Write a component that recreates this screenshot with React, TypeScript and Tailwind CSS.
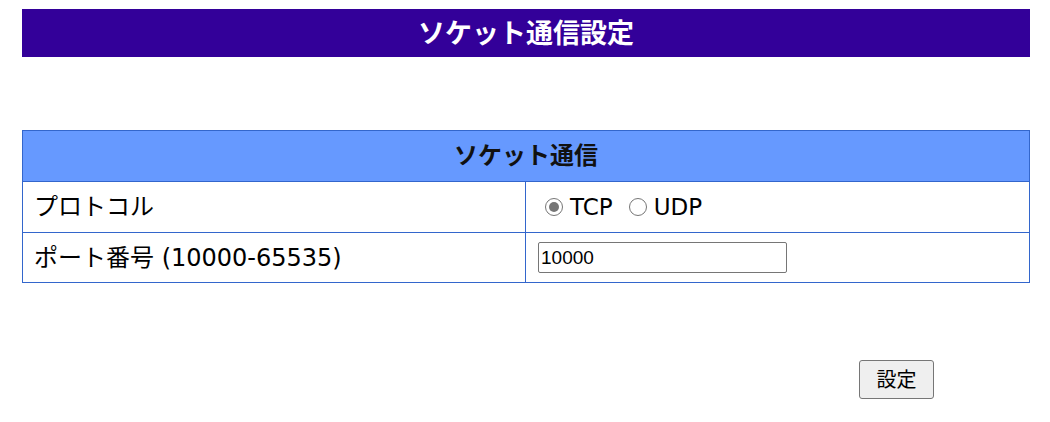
import React from "react";

export default function App() {
  const jp = { fontFamily: '"DejaVu Sans", "Noto Sans CJK JP", sans-serif' };
  return (
    <div className="w-[1050px] h-[422px] bg-white text-black" style={jp}>
      <div className="pt-[9px] pl-[22px] pr-[20px]">
        <div className="h-[48px] bg-[#330099] flex items-center justify-center text-white font-bold text-[27px] leading-none">
          ソケット通信設定
        </div>
      </div>
      <div className="pl-[22px] pr-[20px] pt-[73px]">
        <div className="border border-[#3366cc]">
          <div className="h-[50px] bg-[#6699ff] flex items-center justify-center font-bold text-[24px] leading-none text-[#111]">
            ソケット通信
          </div>
          <div className="flex h-[51px] border-t border-[#3366cc]">
            <div className="w-[503px] border-r border-[#3366cc] flex items-center pl-[11px] text-[24px] leading-none">
              プロトコル
            </div>
            <div className="flex-1 flex items-center pl-[19px] text-[23px] leading-none">
              <label className="flex items-center">
                <span className="w-[18px] h-[18px] rounded-full border border-[#767676] flex items-center justify-center">
                  <span className="w-[10px] h-[10px] rounded-full bg-[#767676]"></span>
                </span>
                <span className="ml-[7px]">TCP</span>
              </label>
              <label className="flex items-center ml-[16px]">
                <span className="w-[18px] h-[18px] rounded-full border border-[#767676]"></span>
                <span className="ml-[7px]">UDP</span>
              </label>
            </div>
          </div>
          <div className="flex h-[50px] border-t border-[#3366cc]">
            <div className="w-[503px] border-r border-[#3366cc] flex items-center pl-[11px] text-[24px] leading-none">
              ポート番号 (10000-65535)
            </div>
            <div className="flex-1 flex items-center pl-[12px]">
              <input
                type="text"
                defaultValue="10000"
                className="w-[249px] h-[31px] border border-[#767676] rounded-[2px] px-[2px] text-[19px] outline-none"
                style={{ fontFamily: '"Liberation Sans", Arial, sans-serif' }}
              />
            </div>
          </div>
        </div>
      </div>
      <div className="flex pl-[859px] pt-[77px]">
        <button className="w-[75px] h-[39px] bg-[#efefef] border border-[#767676] rounded-[3px] text-[20px] leading-none flex items-center justify-center">
          設定
        </button>
      </div>
    </div>
  );
}
